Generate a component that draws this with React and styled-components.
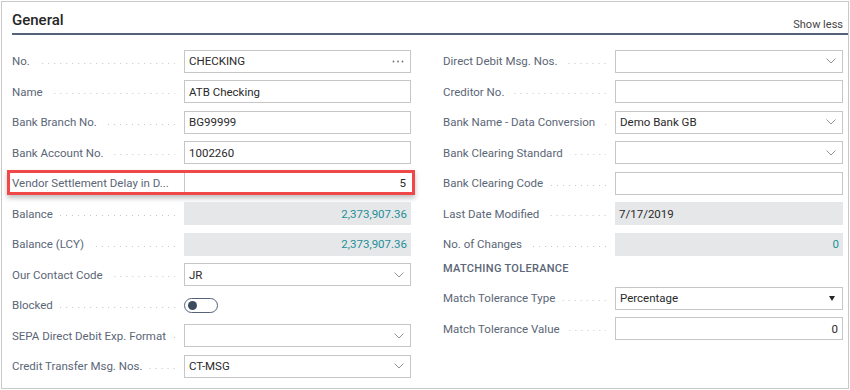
import React from 'react'
import styled, { createGlobalStyle } from 'styled-components'

const GlobalStyle = createGlobalStyle`
  body {
    margin: 0;
    background: #ffffff;
    font-family: Roboto, "Open Sans", sans-serif;
  }
`

const leftFields = [
  { label: 'No.', value: 'CHECKING', kind: 'lookup' },
  { label: 'Name', value: 'ATB Checking' },
  { label: 'Bank Branch No.', value: 'BG99999' },
  { label: 'Bank Account No.', value: '1002260' },
  { label: 'Vendor Settlement Delay in D...', value: '5', kind: 'highlight' },
  { label: 'Balance', value: '2,373,907.36', kind: 'amount' },
  { label: 'Balance (LCY)', value: '2,373,907.36', kind: 'amount' },
  { label: 'Our Contact Code', value: 'JR', kind: 'select' },
  { label: 'Blocked', kind: 'toggle' },
  { label: 'SEPA Direct Debit Exp. Format', value: '', kind: 'select' },
  { label: 'Credit Transfer Msg. Nos.', value: 'CT-MSG', kind: 'select' },
]

const rightFields = [
  { label: 'Direct Debit Msg. Nos.', value: '', kind: 'select' },
  { label: 'Creditor No.', value: '' },
  { label: 'Bank Name - Data Conversion', value: 'Demo Bank GB', kind: 'select' },
  { label: 'Bank Clearing Standard', value: '', kind: 'select' },
  { label: 'Bank Clearing Code', value: '' },
  { label: 'Last Date Modified', value: '7/17/2019', kind: 'readonly' },
  { label: 'No. of Changes', value: '0', kind: 'amount' },
  { heading: 'MATCHING TOLERANCE' },
  { label: 'Match Tolerance Type', value: 'Percentage', kind: 'option' },
  { label: 'Match Tolerance Value', value: '0', kind: 'number' },
]

const Chevron = () => (
  <svg width="10" height="6" viewBox="0 0 10 6">
    <polyline points="0.5,0.5 5,5 9.5,0.5" fill="none" stroke="#939393" strokeWidth="1" />
  </svg>
)

const Ellipsis = () => (
  <svg width="12" height="3" viewBox="0 0 12 3">
    <circle cx="1.5" cy="1.5" r="0.9" fill="#707070" />
    <circle cx="6" cy="1.5" r="0.9" fill="#707070" />
    <circle cx="10.5" cy="1.5" r="0.9" fill="#707070" />
  </svg>
)

const Triangle = () => (
  <svg width="6" height="5" viewBox="0 0 6 5">
    <polygon points="0,0 6,0 3,5" fill="#262626" />
  </svg>
)

const FieldControl = ({ kind, value }) => {
  if (kind === 'toggle') {
    return (
      <Toggle>
        <Knob />
      </Toggle>
    )
  }

  const isAmount = kind === 'amount'
  const alignRight = isAmount || kind === 'number' || kind === 'highlight'

  return (
    <Box
      $readonly={isAmount || kind === 'readonly'}
      $bare={kind === 'highlight'}
      $right={alignRight}
      $teal={isAmount}
    >
      <Value>{value}</Value>
      {kind === 'lookup' && <Icon><Ellipsis /></Icon>}
      {kind === 'select' && <Icon><Chevron /></Icon>}
      {kind === 'option' && <Icon $tight><Triangle /></Icon>}
    </Box>
  )
}

const FieldRow = ({ label, value, kind }) => (
  <Row $highlight={kind === 'highlight'}>
    <Label>
      <Caption>{label}</Caption>
      <Leader />
    </Label>
    <FieldControl kind={kind} value={value} />
  </Row>
)

const Column = ({ fields }) => (
  <ColumnWrap>
    {fields.map((f, i) =>
      f.heading
        ? <GroupHeading key={i}>{f.heading}</GroupHeading>
        : <FieldRow key={i} {...f} />
    )}
  </ColumnWrap>
)

const App = () => (
  <>
    <GlobalStyle />
    <Frame>
      <Header>
        <Title>General</Title>
        <ShowLess>Show less</ShowLess>
      </Header>
      <Body>
        <Column fields={leftFields} />
        <Column fields={rightFields} />
      </Body>
    </Frame>
  </>
)

const Frame = styled.section`
  margin: 1px;
  width: 846px;
  height: 386px;
  border: 1px solid #c9c9c9;
  box-sizing: content-box;
`

const Header = styled.header`
  display: flex;
  justify-content: space-between;
  align-items: flex-start;
  height: 31px;
  margin-left: 10px;
  padding-right: 5px;
  border-bottom: 2px solid #56617a;
`

const Title = styled.h2`
  margin: 8px 0 0;
  font-size: 15px;
  line-height: 20px;
  font-weight: 500;
  color: #262626;
`

const ShowLess = styled.a`
  margin-top: 16px;
  font-size: 11px;
  line-height: 14px;
  color: #444444;
  cursor: pointer;
`

const Body = styled.div`
  display: grid;
  grid-template-columns: 399px 400px;
  column-gap: 32px;
  padding: 11px 0 0 10px;
`

const ColumnWrap = styled.div`
  display: flex;
  flex-direction: column;
`

const Row = styled.div`
  position: relative;
  display: flex;
  align-items: center;
  height: 30.5px;
  font-size: 11.5px;

  ${props => props.$highlight && `
    &::after {
      content: '';
      position: absolute;
      left: -5px;
      right: -4px;
      top: 2px;
      bottom: 4px;
      border: 3px solid #f04848;
      box-shadow: 0 3px 5px rgba(0, 0, 0, 0.25);
      pointer-events: none;
    }
  `}
`

const Label = styled.div`
  display: flex;
  align-items: center;
  flex: none;
  width: 172px;
  color: #5b6676;
`

const Caption = styled.span`
  white-space: nowrap;
`

const Leader = styled.span`
  flex: 1;
  height: 1px;
  margin: 4px 9px 0 7px;
  background-image: linear-gradient(to left, #c4c4c4 1px, transparent 1px);
  background-size: 6px 1px;
  background-repeat: repeat-x;
  background-position: right center;
`

const Box = styled.div`
  flex: 1;
  display: flex;
  align-items: center;
  justify-content: ${props => props.$right ? 'flex-end' : 'space-between'};
  height: 23px;
  box-sizing: border-box;
  padding: 0 4px;
  border: ${props => props.$readonly ? 'none' : '1px solid #c6c6c6'};
  border-top-color: ${props => props.$bare ? 'transparent' : ''};
  border-right-color: ${props => props.$bare ? 'transparent' : ''};
  border-bottom-color: ${props => props.$bare ? 'transparent' : ''};
  background: ${props => props.$readonly ? '#e6e7e8' : '#ffffff'};
  color: ${props => props.$teal ? '#23909a' : '#2a2a2a'};
  white-space: nowrap;
`

const Value = styled.span`
  line-height: 16px;
`

const Icon = styled.span`
  display: flex;
  align-items: center;
  margin-left: auto;
  margin-right: ${props => props.$tight ? '3px' : '2px'};
`

const Toggle = styled.span`
  display: flex;
  align-items: center;
  width: 34px;
  height: 15px;
  box-sizing: border-box;
  padding-left: 3px;
  border: 1.5px solid #56617a;
  border-radius: 8px;
`

const Knob = styled.span`
  width: 9px;
  height: 9px;
  border-radius: 50%;
  background: #3d4b60;
`

const GroupHeading = styled.div`
  height: 23.5px;
  box-sizing: border-box;
  padding-top: 2px;
  font-size: 11px;
  line-height: 14px;
  font-weight: 500;
  letter-spacing: 0.3px;
  color: #5b6676;
`

export default App
